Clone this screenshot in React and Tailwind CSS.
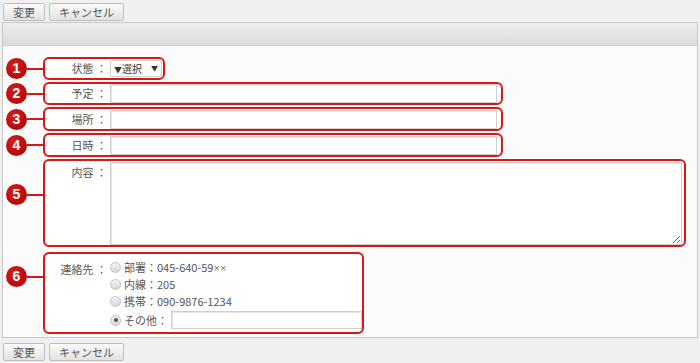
const font = "font-['Noto_Sans_CJK_JP','Liberation_Sans',sans-serif]";

const Btn = ({ children, w }) => (
    <button
        className={`h-[18px] ${w} rounded-[2px] border border-[#bdbdbd] bg-[linear-gradient(#fafafa,#e2e2e2)] text-[11px] leading-none text-[#555] ${font}`}
    >
        {children}
    </button>
);

const Badge = ({ n }) => (
    <div className="w-[21px] h-[21px] shrink-0 rounded-full bg-[radial-gradient(circle_at_40%_35%,#d81e1e,#a80000)] flex items-center justify-center text-white text-[14px] font-bold font-['Liberation_Sans',sans-serif]">
        {n}
    </div>
);

const Line = () => <div className="w-[16px] h-[2px] shrink-0 bg-[#d81818]" />;

const Label = ({ children, top }) => (
    <div className={`w-[62px] shrink-0 whitespace-nowrap text-right text-[11px] text-[#555] ${top ? "pt-[2px]" : ""}`}>
        {children}
    </div>
);

const TextInput = ({ w }) => (
    <input
        type="text"
        className={`${w} h-[19px] ml-[3px] bg-white border border-[#cfcfcf] shadow-[inset_1px_1px_1px_#e4e4e4] outline-none`}
    />
);

const Radio = ({ checked }) => (
    <span className="w-[11px] h-[11px] shrink-0 rounded-full border border-[#c4c4c4] bg-[linear-gradient(#f4f4f4,#d8d8d8)] flex items-center justify-center">
        {checked && <span className="w-[4px] h-[4px] rounded-full bg-[#555]" />}
    </span>
);

const box = "border-2 border-[#d81818] rounded-[6px] bg-white";

const Form = () => (
    <div className="flex flex-col gap-[2px] pl-[3px] pt-[11px] pb-[3px]">
        <div className="flex items-center">
            <Badge n="1" />
            <Line />
            <div className={`${box} w-[122px] h-[23px] flex items-center`}>
                <Label>状態 ：</Label>
                <div className="ml-[3px] h-[17px] w-[52px] border border-[#cfcfcf] bg-white rounded-[2px] flex items-center justify-between px-[3px] text-[10px] text-[#333]">
                    <span>
                        <span className="text-[8px]">▼</span>選択
                    </span>
                    <span className="text-[7px]">▼</span>
                </div>
            </div>
        </div>
        <div className="flex items-center">
            <Badge n="2" />
            <Line />
            <div className={`${box} w-[460px] h-[23px] flex items-center`}>
                <Label>予定 ：</Label>
                <TextInput w="w-[387px]" />
            </div>
        </div>
        <div className="flex items-center">
            <Badge n="3" />
            <Line />
            <div className={`${box} w-[460px] h-[24px] flex items-center`}>
                <Label>場所 ：</Label>
                <TextInput w="w-[387px]" />
            </div>
        </div>
        <div className="flex items-center">
            <Badge n="4" />
            <Line />
            <div className={`${box} w-[460px] h-[24px] flex items-center`}>
                <Label>日時 ：</Label>
                <TextInput w="w-[387px]" />
            </div>
        </div>
        <div className="flex items-start">
            <div className="mt-[25px] flex items-center">
                <Badge n="5" />
                <Line />
            </div>
            <div className={`${box} w-[643px] h-[88px] flex items-start pt-[1px]`}>
                <Label top>内容 ：</Label>
                <textarea className="ml-[3px] w-[572px] h-[83px] bg-white border border-[#cfcfcf] shadow-[inset_1px_1px_1px_#e4e4e4] outline-none" />
            </div>
        </div>
        <div className="flex items-start mt-[3px]">
            <div className="mt-[14px] flex items-center">
                <Badge n="6" />
                <Line />
            </div>
            <div className={`${box} w-[321px] h-[82px] flex items-start pt-[5px]`}>
                <Label top>連絡先 ：</Label>
                <div className="ml-[3px] flex flex-col text-[11px] text-[#555] whitespace-nowrap">
                    <div className="h-[17px] flex items-center gap-[3px]">
                        <Radio />
                        <span>
                            部署：045-640-59<span className="font-['Liberation_Sans',sans-serif] text-[#777]">××</span>
                        </span>
                    </div>
                    <div className="h-[17px] flex items-center gap-[3px]">
                        <Radio />
                        <span>内線：205</span>
                    </div>
                    <div className="h-[17px] flex items-center gap-[3px]">
                        <Radio />
                        <span>携帯：090-9876-1234</span>
                    </div>
                    <div className="h-[20px] flex items-center gap-[3px]">
                        <Radio checked />
                        <span className="shrink-0">その他：</span>
                        <input
                            type="text"
                            className="w-[191px] h-[18px] bg-white border border-[#cfcfcf] shadow-[inset_1px_1px_1px_#e4e4e4] outline-none"
                        />
                    </div>
                </div>
            </div>
        </div>
    </div>
);

export default function App() {
    return (
        <div className={`w-[700px] h-[363px] bg-[#f0f0f0] ${font} overflow-hidden`}>
            <div className="flex gap-[4px] pl-[3px] pt-[3px] h-[22px]">
                <Btn w="w-[42px]">変更</Btn>
                <Btn w="w-[75px]">キャンセル</Btn>
            </div>
            <div className="ml-[2px] w-[696px] border border-[#c8c8c8] bg-[#fbfbfb]">
                <div className="h-[23px] border-b border-[#d0d0d0] bg-[linear-gradient(#eeeeee,#dcdcdc)]" />
                <Form />
            </div>
            <div className="flex gap-[4px] pl-[3px] pt-[5px]">
                <Btn w="w-[42px]">変更</Btn>
                <Btn w="w-[75px]">キャンセル</Btn>
            </div>
        </div>
    );
}
